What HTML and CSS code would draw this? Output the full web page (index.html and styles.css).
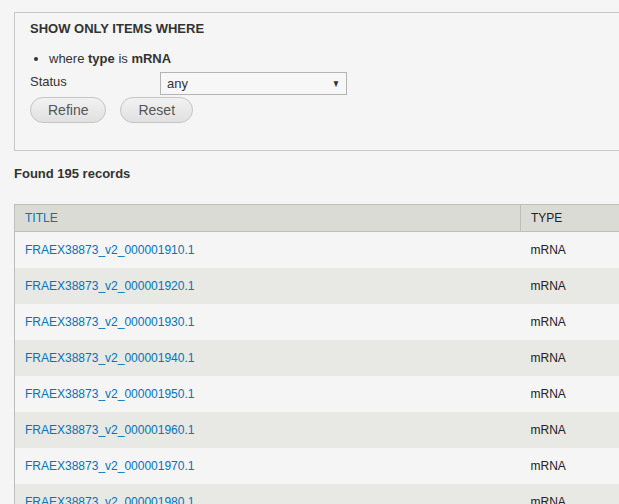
FILE: index.html
```html
<!DOCTYPE html>
<html>
<head>
<meta charset="utf-8">
<link rel="stylesheet" href="styles.css">
</head>
<body>
<div class="page">
  <div class="filter">
    <h2 class="filter-title">SHOW ONLY ITEMS WHERE</h2>
    <ul class="conds">
      <li>where <b>type</b> is <b>mRNA</b></li>
    </ul>
    <div class="field">
      <label class="field-label">Status</label>
      <div class="select"><span>any</span><span class="arrow">&#9660;</span></div>
    </div>
    <div class="actions">
      <button class="btn">Refine</button>
      <button class="btn">Reset</button>
    </div>
  </div>
  <p class="found">Found 195 records</p>
  <table class="results">
    <thead>
      <tr><th class="c-title">TITLE</th><th class="c-type">TYPE</th></tr>
    </thead>
    <tbody>
      <tr class="odd"><td><a href="#">FRAEX38873_v2_000001910.1</a></td><td>mRNA</td></tr>
      <tr class="even"><td><a href="#">FRAEX38873_v2_000001920.1</a></td><td>mRNA</td></tr>
      <tr class="odd"><td><a href="#">FRAEX38873_v2_000001930.1</a></td><td>mRNA</td></tr>
      <tr class="even"><td><a href="#">FRAEX38873_v2_000001940.1</a></td><td>mRNA</td></tr>
      <tr class="odd"><td><a href="#">FRAEX38873_v2_000001950.1</a></td><td>mRNA</td></tr>
      <tr class="even"><td><a href="#">FRAEX38873_v2_000001960.1</a></td><td>mRNA</td></tr>
      <tr class="odd"><td><a href="#">FRAEX38873_v2_000001970.1</a></td><td>mRNA</td></tr>
      <tr class="even"><td><a href="#">FRAEX38873_v2_000001980.1</a></td><td>mRNA</td></tr>
    </tbody>
  </table>
</div>
</body>
</html>
```

FILE: styles.css
```css
html, body {
  margin: 0;
  padding: 0;
  background: #f5f5f5;
  overflow: hidden;
  height: 504px;
}
body {
  font-family: "Liberation Sans", Arial, sans-serif;
  font-size: 13px;
  color: #333;
}
.page {
  width: 720px;
  padding: 12px 0 0 14px;
}
.filter {
  border: 1px solid #c8c8c8;
  padding: 8px 15px 0 15px;
  height: 129px;
  box-sizing: content-box;
}
.filter-title {
  margin: 0;
  font-size: 13px;
  font-weight: bold;
  color: #333;
  line-height: 16px;
}
.conds {
  margin: 14px 0 0 0;
  padding: 0 0 0 19px;
  list-style: disc;
  line-height: 16px;
}
.conds li { color: #333; }
.field {
  display: flex;
  align-items: flex-start;
  margin-top: 5px;
}
.field-label {
  width: 130px;
  line-height: 16px;
  padding-top: 2px;
}
.select {
  width: 174px;
  height: 21px;
  border: 1px solid #b4b4b4;
  background: #f7f7f7;
  display: flex;
  align-items: center;
  justify-content: space-between;
  padding: 0 5px 0 6px;
  box-sizing: content-box;
  font-size: 13px;
  color: #333;
}
.select .arrow {
  font-size: 10px;
  color: #333;
  transform: scaleX(0.8);
}
.actions {
  display: flex;
  gap: 14px;
  margin-top: 2px;
}
.btn {
  font-family: "Liberation Sans", Arial, sans-serif;
  font-size: 14px;
  color: #555;
  height: 26px;
  padding: 0 17px;
  border: 1px solid #c4c4c4;
  border-radius: 13px;
  background: linear-gradient(#f2f2f2, #e0e0e0);
  line-height: 24px;
}
.found {
  margin: 0;
  margin-top: 15px;
  font-weight: bold;
  font-size: 13px;
  line-height: 16px;
  color: #333;
}
.results {
  margin-top: 22px;
  border-collapse: collapse;
  width: 700px;
  border-left: 1px solid #bebfb9;
  border-top: 1px solid #bebfb9;
}
.results th {
  background: #dbdbd5;
  text-align: left;
  font-weight: normal;
  font-size: 12px;
  height: 26px;
  padding: 0 10px;
  border-bottom: 1px solid #bebfb9;
  vertical-align: middle;
}
.results th.c-title {
  color: #0074bd;
  width: 485px;
  border-right: 1px solid #bebfb9;
}
.results th.c-type { color: #222; }
.results td {
  height: 36px;
  padding: 0 10px;
  font-size: 12px;
  color: #222;
  vertical-align: middle;
}
.results tr.odd { background: #f5f5f5; }
.results tr.even { background: #e8e8e4; }
.results a {
  color: #0074bd;
  text-decoration: none;
}
```
